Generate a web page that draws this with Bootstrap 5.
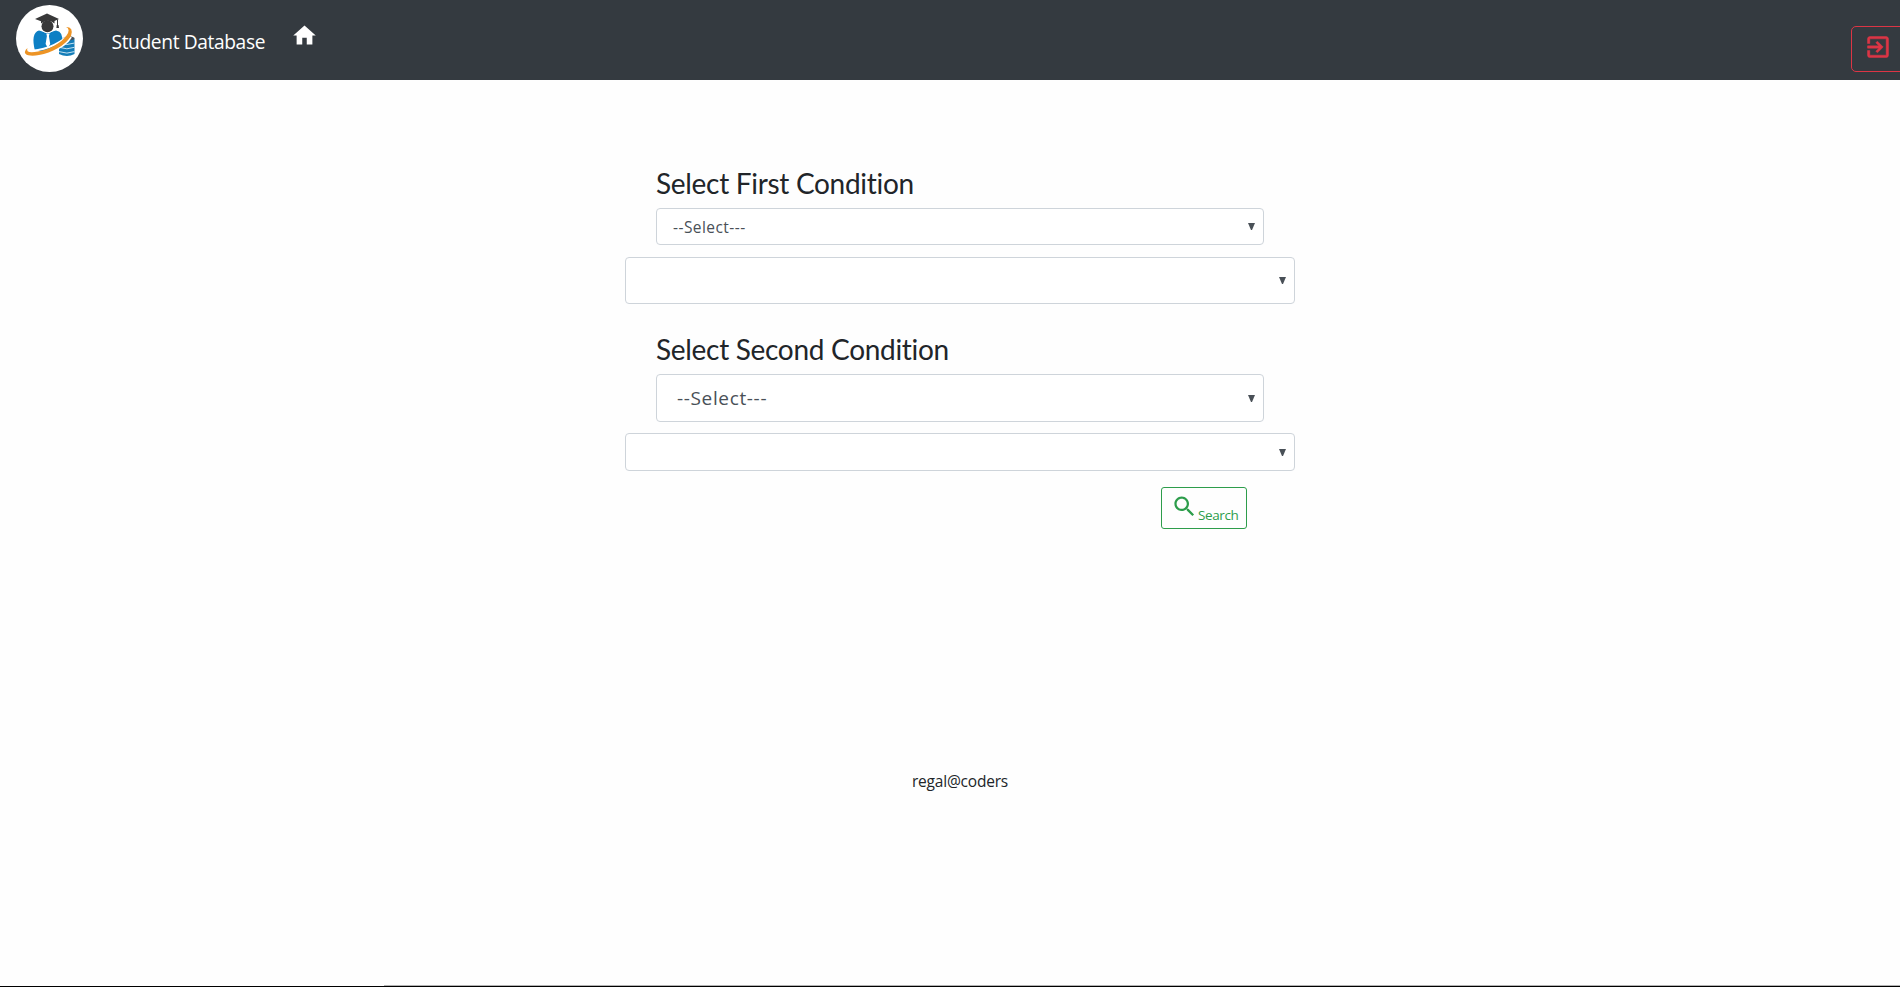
<!DOCTYPE html>
<html lang="en">
<head>
<meta charset="utf-8">
<meta name="viewport" content="width=device-width, initial-scale=1">
<title>Student Database</title>
<link href="https://cdn.jsdelivr.net/npm/bootstrap@5.3.0/dist/css/bootstrap.min.css" rel="stylesheet">
<style>
html{height:100%;overflow:hidden}
body{height:100vh;overflow:hidden;font-family:"Open Sans","Noto Sans",sans-serif;color:#212529;background:#fefefe}
.topbar{height:80px;background:#343a40}
.logo{width:67px;height:67px;margin:5px 0 0 16px}
.brand{margin:27px 0 0 28.5px;font-size:19.2px;line-height:30px;width:154px;letter-spacing:-.38px;color:#fff;white-space:nowrap;text-decoration:none}
.home{margin:22px 0 0 25px}
.logout{height:46px;width:70px;margin:26px -21px 0 0;padding:0 0 0 12px;border-radius:5px;text-align:left;--bs-btn-color:#dc3545;--bs-btn-border-color:#dc3545}
.logout svg{margin-top:-5px}
.panel{width:670px;margin-left:625px;padding-top:84px}
.inner{padding:0 31px}
h3{font-family:Lato,sans-serif;font-size:28px;font-weight:400;line-height:34px;margin:0 0 8px;padding-top:2px;color:#212529;letter-spacing:-.3px;font-variant-ligatures:none}
.form-select{--bs-form-select-bg-img:url("data:image/svg+xml,%3csvg xmlns='http://www.w3.org/2000/svg' viewBox='0 0 7 7'%3e%3cpath fill='%23495057' d='M0 0h7L4 7H3z'/%3e%3c/svg%3e");background-position:right 8px center;background-size:7px 7px;border:1px solid #ced4da;border-radius:4px;color:#495057;background-color:#fff;padding-top:0;padding-bottom:0}
.s1{height:37px;font-size:15.5px;letter-spacing:.45px;padding:2px 30px 0 16px}
.s2{height:47px;margin-top:12px}
.s3{height:48px;font-size:19px;letter-spacing:.65px;padding-left:20px}
.s4{height:38px;margin-top:11px}
.second{margin-top:18px}
.search{width:86px;height:42px;margin:16px 48px 0 0;padding:0 0 0 9px;border-radius:3px;font-size:13.5px;letter-spacing:-.4px;--bs-btn-color:#28a745;color:#2d9d4b;border-color:#2d9d4b}
.search svg{margin-top:5px}
.search span{margin:17px 0 0 0;line-height:20px}
.foot{margin:240px 0 0 20px;width:1880px;font-size:15.5px;letter-spacing:-.2px;line-height:24px}
.edge{height:2px;background:linear-gradient(#000,#000) 0 1px/100% 1px no-repeat,linear-gradient(#b3b3b3,#b3b3b3) 384px 0/100% 1px no-repeat}
</style>
<script src="https://cdn.jsdelivr.net/npm/bootstrap@5.3.0/dist/js/bootstrap.bundle.min.js"></script>
</head>
<body class="d-flex flex-column">
<nav class="topbar d-flex align-items-start flex-shrink-0">
  <svg class="logo flex-shrink-0" viewBox="0 0 67 67" aria-label="Logo">
    <circle cx="33.5" cy="33.5" r="33.5" fill="#fff"/>
    <path fill="#0d7fc4" d="M19 46Q14.500 28 23 25.500L31.500 28 40 25.500Q48 27 46 38L32 46Z"/>
    <path fill="#fff" d="M30.300 28.500h3.400l-.8 2.500 1.300 8-2.300 4-2.300-4 1.300-8z"/>
    <circle cx="31.500" cy="21.300" r="7" fill="#fff"/>
    <circle cx="31.500" cy="21.300" r="6" fill="#383839"/>
    <path fill="#383839" d="M19 14l12-5.500L43 14l-4.500 2v2.500Q32 13 25 18.500V16.200z"/>
    <path d="M41.500 14.500v7" stroke="#383839" stroke-width="1"/><path fill="#383839" d="M40.700 20h1.800l.5 3h-2.600z"/>
    <path fill="#147db8" d="M43 34h15.500v15Q51 53 43 49z"/>
    <ellipse cx="53" cy="33.300" rx="5.700" ry="2" fill="#47515a"/>
    <path fill="none" stroke="#c5e2f1" stroke-width="1" d="M43 38q8 3 15.500 0M43 42.300q8 3 15.500 0M43 46.600q8 3 15.500 0"/>
    <path fill="none" stroke="#fff" stroke-width="2" d="M10 46Q35 46 53 30M34 47Q50 41 55 32"/>
    <path fill="#ed9425" d="M11.500 43C4 50 14 52 23 50 36 47.500 49 41 55 31Q58 22 50 22Q55 24 50.500 30.500C45 38 34 44.500 22 46.500Q9 49 11.500 43Z"/>
  </svg>
  <a class="brand" href="#">Student Database</a>
  <a class="home d-block lh-1" href="#" aria-label="Home"><svg width="27" height="27" viewBox="0 0 24 24" fill="#fff"><path d="M10 20v-6h4v6h5v-8h3L12 3 2 12h3v8z"/></svg></a>
  <button class="logout btn btn-outline-danger ms-auto flex-shrink-0" aria-label="Log out"><svg class="d-block" width="28" height="28" viewBox="0 0 24 24" fill="currentColor" stroke="currentColor" stroke-width=".4"><path d="M10.090 15.590L11.500 17l5-5-5-5-1.410 1.410L12.670 11H3v2h9.670l-2.580 2.590zM19 3H5c-1.110 0-2 .9-2 2v4h2V5h14v14H5v-4H3v4c0 1.100.89 2 2 2h14c1.100 0 2-.9 2-2V5c0-1.100-.9-2-2-2z"/></svg></button>
</nav>
<main>
  <form class="panel">
    <div class="inner">
      <h3>Select First Condition</h3>
      <select class="form-select s1" aria-label="First condition"><option>--Select---</option></select>
    </div>
    <select class="form-select s2" aria-label="First value"></select>
    <div class="inner second pt-2">
      <h3>Select Second Condition</h3>
      <select class="form-select s3" aria-label="Second condition"><option>--Select---</option></select>
    </div>
    <select class="form-select s4" aria-label="Second value"></select>
    <div class="d-flex justify-content-end">
      <button type="button" class="search btn btn-outline-success d-flex align-items-start"><svg width="27" height="27" viewBox="0 0 24 24" fill="currentColor"><path d="M15.500 14h-.79l-.28-.27C15.410 12.590 16 11.110 16 9.500 16 5.910 13.090 3 9.500 3S3 5.910 3 9.500 5.910 16 9.500 16c1.610 0 3.090-.59 4.230-1.570l.27.28v.79l5 4.990L20.490 19l-4.990-5zm-6 0C7.010 14 5 11.990 5 9.500S7.010 5 9.500 5 14 7.010 14 9.500 11.990 14 9.500 14z"/></svg><span>Search</span></button>
    </div>
  </form>
</main>
<footer class="foot text-center">regal@coders</footer>
<div class="edge mt-auto"></div>
</body>
</html>
